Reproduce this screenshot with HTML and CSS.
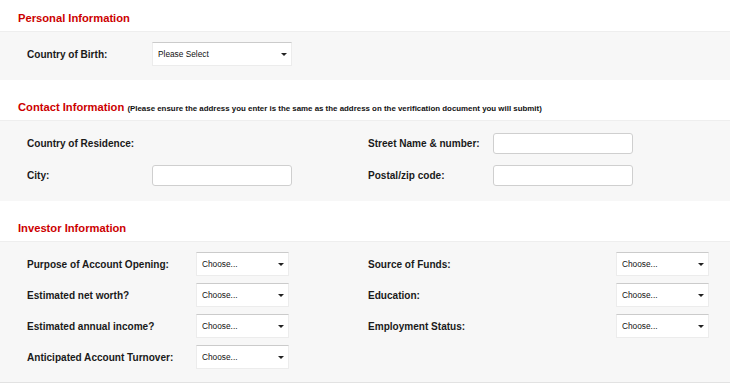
FILE: index.html
```html
<!DOCTYPE html>
<html lang="en">
<head>
    <meta charset="UTF-8">
    <meta name="viewport" content="width=device-width, initial-scale=1.0">
    <title>Account Application - Personal Details</title>
    <link rel="stylesheet" href="styles.css">
</head>
<body>
    <!-- Personal -->
    <h2 class="section-title">Personal Information</h2>
    <div class="section-box personal-grid">
        <label class="field-label" for="birthCountry">Country of Birth:</label>
        <span class="select-wrap">
            <select id="birthCountry" class="field-select"><option>Please Select</option></select>
        </span>
    </div>

    <!-- Contact -->
    <h2 class="section-title spaced">Contact Information <span class="title-note">(Please ensure the address you enter is the same as the address on the verification document you will submit)</span></h2>
    <div class="section-box contact-grid">
        <label class="field-label">Country of Residence:</label>
        <span></span>
        <span></span>
        <label class="field-label" for="street">Street Name &amp; number:</label>
        <input type="text" id="street" class="field-input">

        <label class="field-label" for="city">City:</label>
        <input type="text" id="city" class="field-input">
        <span></span>
        <label class="field-label" for="zip">Postal/zip code:</label>
        <input type="text" id="zip" class="field-input">
    </div>

    <!-- Investor -->
    <h2 class="section-title spaced">Investor Information</h2>
    <div class="section-box investor-grid last">
        <label class="field-label">Purpose of Account Opening:</label>
        <span class="select-wrap"><select class="field-select"><option>Choose...</option></select></span>
        <span></span>
        <label class="field-label">Source of Funds:</label>
        <span class="select-wrap"><select class="field-select"><option>Choose...</option></select></span>

        <label class="field-label">Estimated net worth?</label>
        <span class="select-wrap"><select class="field-select"><option>Choose...</option></select></span>
        <span></span>
        <label class="field-label">Education:</label>
        <span class="select-wrap"><select class="field-select"><option>Choose...</option></select></span>

        <label class="field-label">Estimated annual income?</label>
        <span class="select-wrap"><select class="field-select"><option>Choose...</option></select></span>
        <span></span>
        <label class="field-label">Employment Status:</label>
        <span class="select-wrap"><select class="field-select"><option>Choose...</option></select></span>

        <label class="field-label">Anticipated Account Turnover:</label>
        <span class="select-wrap"><select class="field-select"><option>Choose...</option></select></span>
    </div>
</body>
</html>
```

FILE: styles.css
```css
/* page */
body {
    margin: 0;
    width: 730px;
    font-family: "Liberation Sans", Arial, sans-serif;
    color: #1a1a1a;
    background: #fff;
}

/* red section titles */
.section-title {
    margin: 0;
    padding: 11px 0 6px 18px;
    height: 14px;
    line-height: 14px;
    font-size: 11.2px;
    font-weight: bold;
    color: #cc0000;
    white-space: nowrap;
}

.section-title.spaced {
    margin-top: 9px;
}

.title-note {
    font-size: 7.9px;
    line-height: 8px;
    color: #111;
}

/* grey panels */
.section-box {
    display: grid;
    align-items: center;
    background-color: #f7f7f7;
    border-top: 1px solid #eeeeee;
    padding-left: 27px;
}

.personal-grid {
    grid-template-columns: 125px 140px;
    padding-top: 10px;
    padding-bottom: 14px;
}

.contact-grid {
    grid-template-columns: 125px 140px 76px 125px 140px;
    row-gap: 11px;
    padding-top: 12px;
    padding-bottom: 15px;
}

.investor-grid {
    grid-template-columns: 169px 93px 79px 248px 93px;
    row-gap: 7px;
    padding-top: 10px;
    padding-bottom: 13px;
}

.section-box.last {
    border-bottom: 1px solid #e2e2e2;
}

.field-label {
    font-size: 10.05px;
    font-weight: bold;
    color: #1a1a1a;
}

.field-input {
    box-sizing: border-box;
    width: 140px;
    height: 21px;
    margin: 0;
    border: 1px solid #cfcfcf;
    border-radius: 3px;
    background: #fff;
}

/* selects with a small black arrow */
.select-wrap {
    position: relative;
    display: block;
    height: 24px;
}

.select-wrap::after {
    content: "";
    position: absolute;
    right: 5px;
    top: 11px;
    border-left: 3px solid transparent;
    border-right: 3px solid transparent;
    border-top: 3px solid #222;
    pointer-events: none;
}

.field-select {
    -webkit-appearance: none;
    appearance: none;
    box-sizing: border-box;
    width: 100%;
    height: 24px;
    margin: 0;
    padding: 0 14px 0 5px;
    font-family: "Liberation Sans", Arial, sans-serif;
    font-size: 8.3px;
    color: #111;
    background: #fff;
    border: 1px solid #ececec;
    border-top-color: #cbcbcb;
    border-radius: 0;
}
```
